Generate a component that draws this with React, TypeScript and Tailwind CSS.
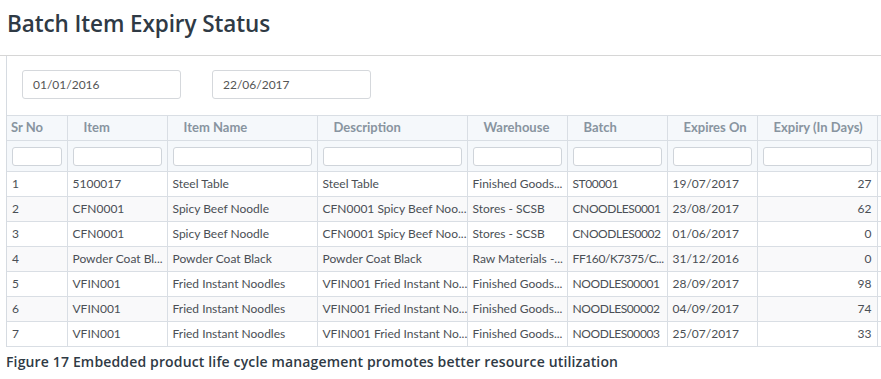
const columns = [
  { label: "Sr No", width: "w-[60px]", pad: "pl-1" },
  { label: "Item", width: "w-[100px]", pad: "pl-4" },
  { label: "Item Name", width: "w-[150px]", pad: "pl-4" },
  { label: "Description", width: "w-[150px]", pad: "pl-4" },
  { label: "Warehouse", width: "w-[100px]", pad: "pl-4" },
  { label: "Batch", width: "w-[100px]", pad: "pl-4" },
  { label: "Expires On", width: "w-[90px]", pad: "pl-4" },
  { label: "Expiry (In Days)", width: "w-[120px]", pad: "pl-4" },
]

const rows = [
  ["1", "5100017", "Steel Table", "Steel Table", "Finished Goods...", "ST00001", "19/07/2017", "27"],
  ["2", "CFN0001", "Spicy Beef Noodle", "CFN0001 Spicy Beef Noo...", "Stores - SCSB", "CNOODLES0001", "23/08/2017", "62"],
  ["3", "CFN0001", "Spicy Beef Noodle", "CFN0001 Spicy Beef Noo...", "Stores - SCSB", "CNOODLES0002", "01/06/2017", "0"],
  ["4", "Powder Coat Bl...", "Powder Coat Black", "Powder Coat Black", "Raw Materials -...", "FF160/K7375/C...", "31/12/2016", "0"],
  ["5", "VFIN001", "Fried Instant Noodles", "VFIN001 Fried Instant No...", "Finished Goods...", "NOODLES00001", "28/09/2017", "98"],
  ["6", "VFIN001", "Fried Instant Noodles", "VFIN001 Fried Instant No...", "Finished Goods...", "NOODLES00002", "04/09/2017", "74"],
  ["7", "VFIN001", "Fried Instant Noodles", "VFIN001 Fried Instant No...", "Finished Goods...", "NOODLES00003", "25/07/2017", "33"],
]

function DateBox({ value }: { value: string }) {
  return (
    <div className="flex h-[29px] w-[159px] items-center rounded-[3px] border border-[#d5d8dc] pl-[10px] text-[12px] text-[#555]">
      {value}
    </div>
  )
}

export default function App() {
  return (
    <div className="h-[379px] w-[881px] overflow-hidden bg-white font-['Lato',sans-serif]">
      <div className="h-[56px] border-b border-[#d6d6d6] pt-[8px] pl-[7px]">
        <h1 className="font-['Open_Sans',sans-serif] text-[22.5px] leading-[32px] font-semibold tracking-[-0.1px] text-[#2f3a45]">
          Batch Item Expiry Status
        </h1>
      </div>
      <div className="ml-[6px] border-l border-[#d6dbe1]">
        <div className="flex gap-[31px] pt-[14px] pb-[16px] pl-[15px]">
          <DateBox value="01/01/2016" />
          <DateBox value="22/06/2017" />
        </div>
        <table className="w-[970px] table-fixed border-collapse text-[12px] text-[#4a4f55]">
          <colgroup>
            {columns.map((c) => (
              <col key={c.label} className={c.width} />
            ))}
            <col className="w-[100px]" />
          </colgroup>
          <thead>
            <tr className="h-[25px] bg-[#f5f8fb]">
              {columns.map((c) => (
                <th
                  key={c.label}
                  className={`border border-l-0 border-[#d9dee4] text-left text-[13px] font-bold whitespace-nowrap text-[#8894a0] ${c.pad}`}
                >
                  {c.label}
                </th>
              ))}
              <th className="border border-[#d9dee4]" />
            </tr>
            <tr className="h-[31px] bg-[#f5f8fb]">
              {columns.map((c) => (
                <th key={c.label} className="border border-l-0 border-[#d9dee4] px-[5px]">
                  <div className="h-[19px] rounded-[3px] border border-[#cfd4da] bg-white" />
                </th>
              ))}
              <th className="border border-[#d9dee4]" />
            </tr>
          </thead>
          <tbody>
            {rows.map((r, i) => (
              <tr key={r[0]} className={`h-[25px] ${i % 2 === 1 ? "bg-[#f9f9fa]" : "bg-white"}`}>
                {r.map((cell, j) => (
                  <td
                    key={j}
                    className={`overflow-hidden border border-l-0 border-[#d9dee4] px-[5px] whitespace-nowrap ${
                      j === 7 ? "text-right" : "text-left"
                    } ${j === 5 ? "tracking-[-0.4px]" : ""}`}
                  >
                    {cell}
                  </td>
                ))}
                <td className="border-t border-b border-[#d9dee4] bg-white" />
              </tr>
            ))}
          </tbody>
        </table>
      </div>
      <p className="mt-[4px] pl-[6px] font-['Open_Sans',sans-serif] text-[14px] font-semibold tracking-[0.15px] text-[#2f3a45]">
        Figure 17 Embedded product life cycle management promotes better resource utilization
      </p>
    </div>
  )
}
